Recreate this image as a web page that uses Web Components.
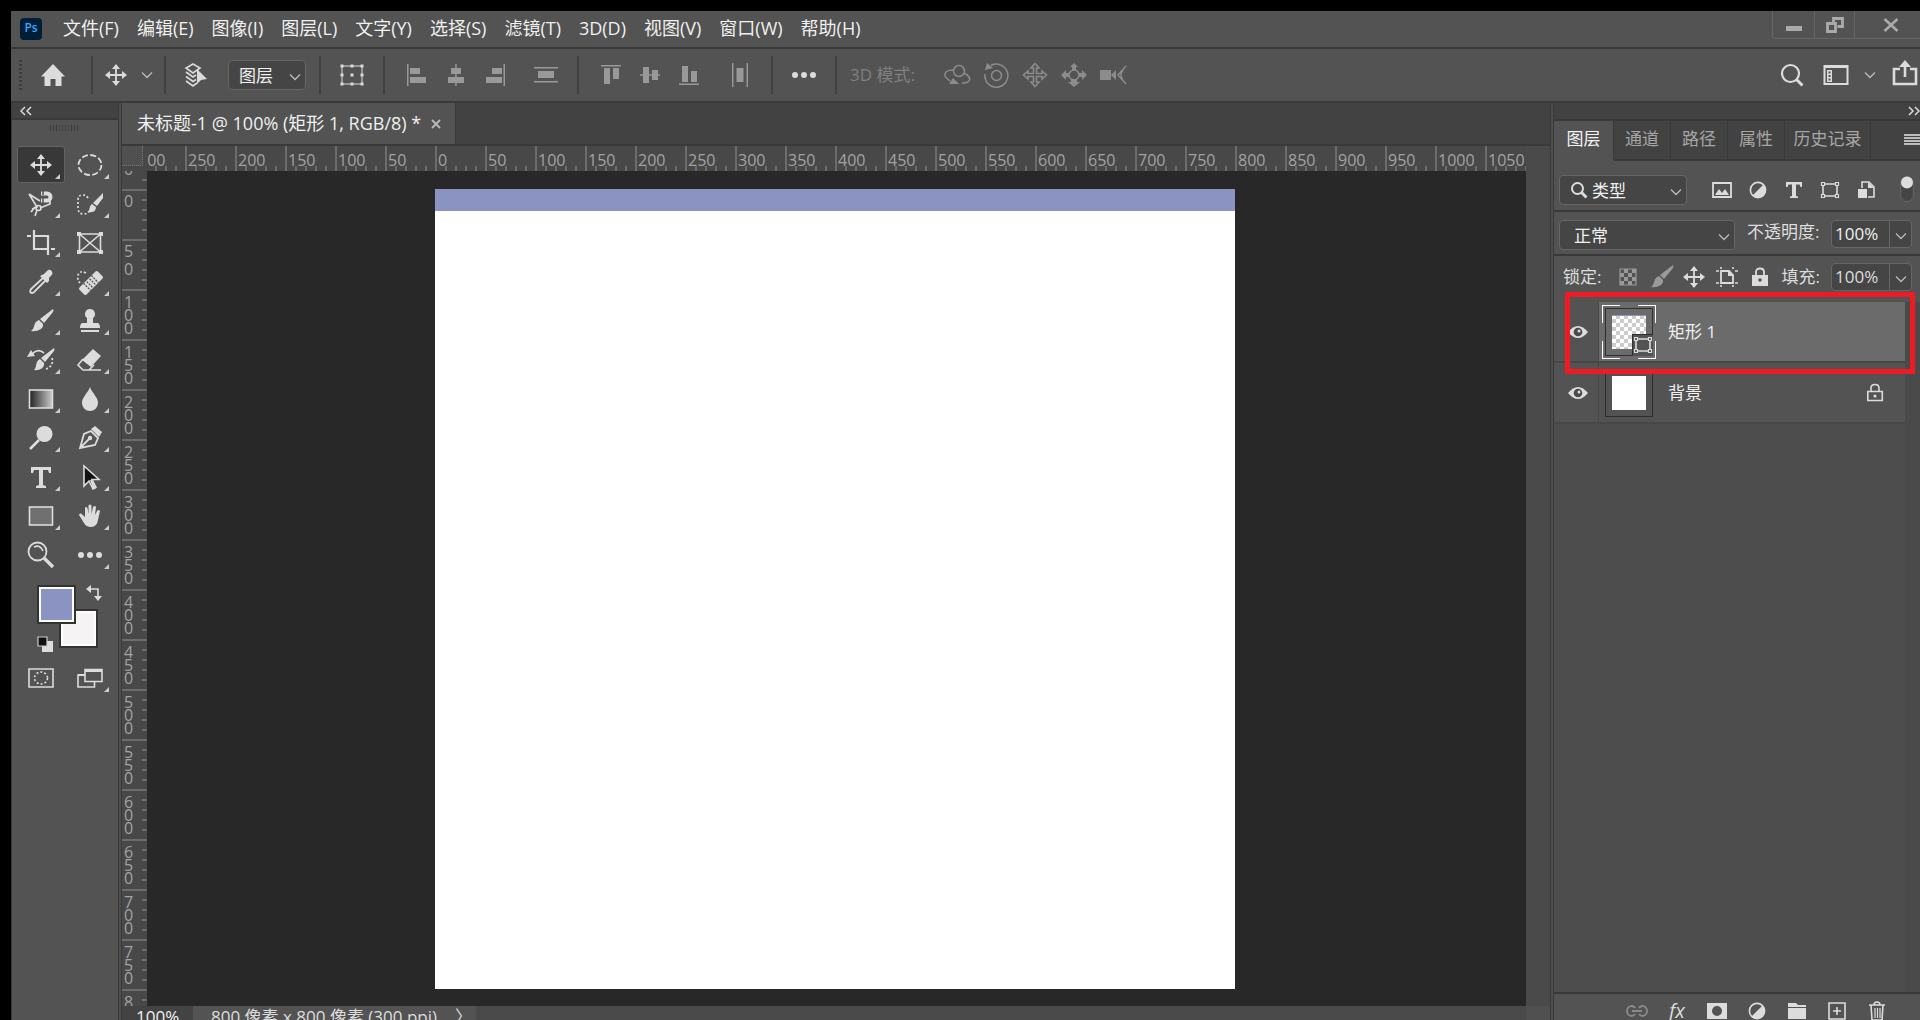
<!DOCTYPE html>
<html lang="zh-CN">
<head>
<meta charset="utf-8">
<title>未标题-1 @ 100%</title>
<style>
html,body{margin:0;height:100%;background:#000;overflow:hidden}
body{font-family:"Open Sans","Noto Sans CJK SC",sans-serif;color:#f0f0f0;
--bg:#535353;--dark:#424242;--line:#393939;--field:#454545;--edge:#666;--icon:#dcdcdc;--dim:#999}
</style>
</head>
<body>
<ps-app></ps-app>
<script>
const BASE = `*,:host{box-sizing:border-box}button,select,input{font:inherit;color:inherit;background:none;border:0;margin:0;padding:0;outline:0}
button{display:flex;align-items:center;justify-content:center}`;
function define(name, css, html) {
  customElements.define(name, class extends HTMLElement {
    connectedCallback() {
      if (this.shadowRoot) return;
      const root = this.attachShadow({ mode: 'open' });
      root.innerHTML = `<style>${BASE}${css}</style>` + (typeof html === 'function' ? html(this) : html);
    }
  });
}

/* Icons: [width, height, markup]; f = filled with currentColor, s = stroked */
const s = (d, w = 1.6, x = '') => `<path d="${d}" fill="none" stroke="currentColor" stroke-width="${w}" ${x}/>`;
const f = (d, x = '') => `<path d="${d}" fill="currentColor" ${x}/>`;
const ICONS = {
  chev: [12, 8, s('M1 1.5 6 6.5 11 1.5', 1.3)],
  home: [26, 24, f('M13 1 1 13.5h3.5V23h6v-7h5v7h6v-9.500H25z')],
  move: [24, 24, s('M12 4v16M4 12h16', 1.8) + f('M12 1l4 5H8zM12 23l4-5H8zM1 12l5-4v8zM23 12l-5-4v8z')],
  layers: [26, 26, s('M9 2 16 6 9 11 2 6zM2 10l7 5 3-2M2 14.500l7 5 3-2M2 19l7 5 4-3', 1.6) + f('M13 7v15l4-4 6-1z')],
  transform: [26, 24, s('M3 3h20v18H3z', 1) + f('M1.500 1.500h3v3h-3zM11.500 1.500h3v3h-3zM21.500 1.500h3v3h-3zM1.500 10.500h3v3h-3zM11.500 10.500h3v3h-3zM21.500 10.500h3v3h-3zM1.500 19.500h3v3h-3zM11.500 19.500h3v3h-3zM21.500 19.500h3v3h-3z')],
  al: [20, 22, f('M0 0h1.500v22H0zM3 4h10v6H3zM3 13h16v6H3z')],
  ac: [18, 22, f('M8.200 0h1.500v22H8.200zM4 4h10v6H4zM1 13h16v6H1z')],
  ar: [20, 22, f('M18.500 0H20v22h-1.500zM7 4h10v6H7zM1 13h16v6H1z')],
  ad: [26, 22, f('M1 3h24v1.500H1zM5 7h16v7H5zM1 17h24v1.500H1z')],
  at: [22, 22, f('M1 1h20v1.500H1zM4 4h6v16H4zM13 4h6v11h-6z')],
  am: [22, 22, f('M1 10.200h20v1.500H1zM4 3h6v16H4zM13 6h6v10h-6z')],
  ab: [22, 22, f('M1 19.500h20V21H1zM4 2h6v16H4zM13 7h6v11h-6z')],
  av: [16, 26, f('M0 1h1.500v24H0zM4.500 6h7v14h-7zM14.500 1H16v24h-1.500z')],
  dots: [26, 8, '<circle cx="4" cy="4" r="3" fill="currentColor"/><circle cx="13" cy="4" r="3" fill="currentColor"/><circle cx="22" cy="4" r="3" fill="currentColor"/>'],
  orbit: [28, 24, '<circle cx="16" cy="8" r="5.500" fill="none" stroke="currentColor" stroke-width="1.500"/>' + s('M10 7Q1 7 2 13q1 2 5 5M21 10c6 3 7 7 4 9-2 1-4 1-6 1', 1.5) + f('M6 21h10l-6-6z')],
  roll: [26, 26, '<circle cx="13.500" cy="13.500" r="5" fill="none" stroke="currentColor" stroke-width="1.500"/>' + s('M8 3.500A11.500 11.500 0 1 1 2 12', 1.5) + f('M2 8l2-7 6 5z')],
  pan: [26, 26, s('M13 1.500l4 4.500h-2.500v5.500H20V9l4.500 4-4.500 4v-2.500h-5.500V20H17l-4 4.500L9 20h2.500v-5.500H6V17l-4.500-4L6 9v2.500h5.500V6H9z', 1.6)],
  slide: [28, 26, '<circle cx="14" cy="13" r="5" fill="none" stroke="currentColor" stroke-width="1.500"/>' + f('M14 1l4 4h-2v3h-4V5h-2zM14 25l6-5h-3v-3h-6v3H8zM1 13l5-5v3h3v4H6v3zM27 13l-5-5v3h-3v4h3v3z')],
  cam: [28, 22, f('M1 6h11v10H1zM12 11l5-5v10z') + s('M27 2 19 11l8 9M24 6q-4 5 0 10', 1.5)],
  search: [24, 24, '<circle cx="10.500" cy="10.500" r="8.500" fill="none" stroke="currentColor" stroke-width="2.200"/>' + s('M16.500 16.500 22.500 22.500', 3)],
  ssearch: [18, 18, '<circle cx="7.500" cy="7.500" r="5.500" fill="none" stroke="currentColor" stroke-width="2"/>' + s('M11 11 16.500 16.500', 3)],
  work: [26, 22, s('M1.500 2h23v18h-23z', 2) + f('M1 1h24v3H1zM4 6h5v12H4z') + '<path d="M5.500 7.500h2v2h-2zM5.500 11h2v2h-2zM5.500 14.500h2v2h-2z" fill="#535353"/>'],
  share: [26, 26, s('M8 9H2v15h22V9h-6', 2.6) + s('M13 17V5', 2.6) + f('M13 0l6 7H7z')],
  marquee: [26, 24, '<ellipse cx="13" cy="12" rx="11.500" ry="10" fill="none" stroke="currentColor" stroke-width="1.800" stroke-dasharray="6 2.450"/>'],
  lasso: [28, 28, s('M2 4l8 13-5 2M2 4l11 7M13 18l10-4v-4M10 20l-2 6M8 17l-4 5', 1.7) + '<circle cx="11.500" cy="18" r="2.500" fill="none" stroke="currentColor" stroke-width="1.600"/>' + s('M14 3.500h6a3.500 3.500 0 0 1 0 7h-6', 4) + '<path d="M16 1v4M16 8v5" stroke="#535353" stroke-width="1.500"/>'],
  quick: [28, 26, s('M12 7Q10 4 7 4 2 4 2 9v9q1 5 5 5 5 0 6-3', 1.7, 'stroke-dasharray="2 2"') + f('M27 2v5l-6 8-4-3zM16 13l4 3c0 5-5 6-8 5 2-2 1-6 4-8z')],
  crop: [28, 26, s('M0 6h4M7 6h14v14M7 0v19h14M24 19h4M21 19v6', 2.2)],
  frame: [26, 24, s('M2.500 3h21v18h-21zM2.500 3l21 18M23.500 3l-21 18', 1.6) + f('M0 1h4v4H0zM22 1h4v4h-4zM0 19h4v4H0zM22 19h4v4h-4z')],
  eyedrop: [26, 26, s('M15 9 3 20q-2 4 1 4 2 0 3-2L18 11', 1.8) + f('M14 6l2-1 4-4q4-1 4.500 4L21 9v3l-2 2-7-7z')],
  heal: [28, 26, s('M10 4Q4 1 2 6q-1 5 2 8', 1.7, 'stroke-dasharray="2 2"') + '<g transform="rotate(-45 15 14)"><rect x="2" y="9" width="26" height="10" rx="2" fill="currentColor"/><path d="M9.500 9v10M20.500 9v10M13 10v8M17 10v8" stroke="#535353" stroke-width="1.300" stroke-dasharray="2 1"/></g>'],
  brush: [26, 26, f('M25 1q1 1 0 3l-9 11-4-4zM11 12l4 4c1 5-6 8-12 7 4-2 2-9 8-11z')],
  stamp: [24, 26, f('M12 1a5 5 0 0 1 3 9v5h5q2 1 2 5H2q0-4 2-5h5v-5a5 5 0 0 1 3-9zM3 22h18v2H3z')],
  hist: [30, 26, f('M28 1q1 1 0 3l-9 11-4-4zM14 12l4 4c1 5-5 8-10 7 3-2 1-9 6-11zM1 10l4-7 4 6z') + s('M6 7q6-6 12-1', 1.7) + s('M26 11q2 8-6 11', 1.8, 'stroke-dasharray="2 2"')],
  eraser: [26, 24, f('M16 1l8 7-10 11-9-7z') + s('M6 11l-5 6 5 5h6l5-5M6 22h18', 1.6)],
  grad: [26, 22, '<defs><linearGradient id="g"><stop offset="0" stop-color="#222"/><stop offset="1" stop-color="#ccc"/></linearGradient></defs><rect x="1.500" y="2" width="23" height="18" fill="url(#g)" stroke="currentColor" stroke-width="1.600"/>'],
  drop: [20, 26, f('M10 1c2 6 8 10 8 16a8 8 0 0 1-16 0c0-6 6-10 8-16z')],
  dodge: [26, 26, '<circle cx="16.500" cy="9" r="8" fill="currentColor"/>' + s('M11 15 2 24', 2.6)],
  pen: [26, 26, s('M3 23l4-14 7-3 7 7-3 7zM4 22l8-8', 1.8) + '<circle cx="13" cy="13" r="2.200" fill="currentColor"/>' + f('M14 4l4-3 7 6-3 5z')],
  type: [24, 24, f('M2 2h20v6h-2l-1-3h-5v15l3 1v2H7v-2l3-1V5H5L4 8H2z')],
  arrow: [24, 26, '<path d="M6 2v20l5-5 4 8 3-1.500-4-8h7z" fill="#111" stroke="currentColor" stroke-width="1.600"/>' + f('M12 16l3 9 3-1-4-8z')],
  rect: [26, 22, '<rect x="1.500" y="2" width="23" height="18" fill="#707070" stroke="currentColor" stroke-width="1.600"/>'],
  hand: [24, 26, f('M7 14V5q1-2 2.500 0l1 6V2.500q1-2 3 0V11l1.500-7q2-2 3 0l-1 8 2-4q2-2 3 0l-2 9q-1 7-7 7-5 0-7-4L1 12q0-2 2-1.500z')],
  zoom: [28, 28, '<circle cx="10.500" cy="10.500" r="9" fill="none" stroke="currentColor" stroke-width="1.800"/>' + s('M17 17l9 9', 3.4) + s('M7 6q6-3 9 4', 1.6)],
  swap: [16, 16, s('M3 4h9v9', 1.6) + f('M0 4l5-4v8zM12 16l-4-5h8z')],
  deflt: [16, 16, '<path d="M5 5h11v11H5z" fill="#ddd"/><path d="M1 1h9v9H1z" fill="#111" stroke="#ccc" stroke-width="1.200"/>'],
  mask: [26, 20, s('M1 1h24v18H1z', 1.6) + '<ellipse cx="13" cy="10" rx="6.500" ry="6" fill="none" stroke="currentColor" stroke-width="1.600" stroke-dasharray="2 2"/>'],
  screen: [26, 20, s('M8 1.500h17v12H8zM8 7H1v12h16.500v-5.500', 1.6) + f('M8 1h17v3H8zM1 6h7v2H1z')],
  pic: [20, 16, s('M1 1h18v14H1z', 1.8) + f('M3 13l4-6 3 4 3-4 4 6z')],
  adj: [18, 18, '<circle cx="9" cy="9" r="7.600" fill="none" stroke="currentColor" stroke-width="1.600"/>' + f('M14.500 3.500a7.700 7.700 0 0 1-11 11z')],
  stype: [18, 18, f('M1 1h16v5h-1.500l-1-2.500H11V15l2 .5V17H5v-1.500l2-.5V3.500H3.500L2.500 6H1z')],
  shape: [20, 18, s('M3 3h14v12H3z', 1.6) + '<path d="M1.500 1.500h3v3h-3zM15.500 1.500h3v3h-3zM1.500 13.500h3v3h-3zM15.500 13.500h3v3h-3z" fill="#535353" stroke="currentColor" stroke-width="1.200"/>'],
  smart: [18, 18, s('M5 7V1h7l5 5v10h-6', 1.6) + f('M1 8h9v9H1zM11 1l6 6h-6z')],
  toggle: [14, 26, '<rect x=".7" y=".5" width="12.600" height="25" rx="6.300" fill="#454545" stroke="#666"/><circle cx="7" cy="6.500" r="6" fill="#ddd"/>'],
  burger: [16, 12, f('M0 0h16v2H0zM0 3h16v2H0zM0 6h16v2H0zM0 9h16v2H0z')],
  check: [18, 18, s('M1 1h16v16H1z', 1.2) + f('M5 1h4v4H5zM13 1h4v4h-4zM1 5h4v4H1zM9 5h4v4H9zM5 9h4v4H5zM13 9h4v4h-4zM1 13h4v4H1zM9 13h4v4H9z')],
  artb: [22, 20, s('M5 4h8l4 4v8H5z', 1.8) + f('M12 4l6 5h-6z') + s('M0 4h3M19 4h3M0 16h3M19 16h3M5 0v2M17 0v2M5 18v2M17 18v2', 1.6)],
  lock: [18, 20, f('M1 8h16v11H1z') + s('M5 9V5q0-3.500 4-3.500t4 3.500v4', 1.8) + '<circle cx="9" cy="13" r="1.800" fill="#535353"/>'],
  olock: [18, 20, s('M1.800 8.500h14.500v9H1.800zM5 8V5q0-3.500 4-3.500t4 3.500v3', 1.6) + '<circle cx="9" cy="13" r="1.600" fill="currentColor"/>'],
  eye: [20, 14, f('M0 7Q10-5 20 7 10 19 0 7z') + '<circle cx="10" cy="7" r="4.300" fill="#4a4a4a"/><circle cx="11" cy="6" r="1.500" fill="currentColor"/>'],
  link: [22, 12, s('M9 9q-1 2-4 2-4-1-4-5t4-5q3 0 4 2M13 3q1-2 4-2 4 1 4 5t-4 5q-3 0-4-2M6 6h10', 1.8)],
  lmask: [20, 16, '<path d="M0 0h20v16H0zM10 3a5 5 0 1 0 0 10 5 5 0 0 0 0-10z" fill="currentColor" fill-rule="evenodd"/>'],
  folder: [18, 16, f('M0 0h8l2 2h8v2H0zM0 5h18v11H0z')],
  plus: [18, 18, s('M1 1h16v16H1zM5 9h8M9 5v8', 1.6)],
  trash: [18, 20, s('M1 4h16M3 4l1 15h10l1-15M6 4q0-3 3-3t3 3', 1.6) + s('M7 7v10M9.500 7v10M12 7v10', 1.2)],
  min: [16, 6, f('M0 0h16v5H0z')],
  restore: [18, 16, s('M7.500 6V1.500h9v8h-5M1.500 6.500h8v8h-8z', 2.8)],
  close: [16, 14, s('M1.500 1l13 12M14.500 1l-13 12', 2.6)],
  tabx: [10, 10, s('M1 1l8 8M9 1 1 9', 1.8)],
  dbl: [12, 10, s('M5 1 1 5l4 4M11 1 7 5l4 4', 1.5)],
  dbr: [12, 10, s('M1 1l4 4-4 4M7 1l4 4-4 4', 1.5)]
};
define('ps-icon', ':host{display:inline-flex;flex:none;color:var(--icon)}svg{display:block}', el => {
  const [w, h, m] = ICONS[el.getAttribute('name')];
  return `<svg width="${w}" height="${h}" viewBox="0 0 ${w} ${h}" aria-hidden="true">${m}</svg>`;
});
const icon = (n, c = '') => `<ps-icon name="${n}" class="${c}"></ps-icon>`;

define('ps-menu-bar', `:host{display:flex;height:38px;flex:none;background:var(--bg);border-bottom:2px solid var(--line);padding-left:9px;font-size:18px}
.logo{align-self:center;width:22px;height:22px;border-radius:4px;background:#001e36;color:#31a8ff;font-weight:600;font-size:12px;line-height:20px;text-align:center;margin:0 21px 0 0}
nav{display:flex;gap:18px;padding-bottom:3px}nav button{line-height:26px;white-space:nowrap}
.win{margin-left:auto;display:flex;height:28px;border:1px solid #666;border-width:0 0 1px 1px;border-radius:0 0 0 4px;--icon:#aaa}
.win button{border-right:1px solid #666;width:42px}.win button:first-child{padding-top:9px}.win button:nth-child(2){width:40px}.win button:last-child{width:65px;border:0;padding-left:6px}`,
`<div class="logo">Ps</div><nav>${['文件(F)', '编辑(E)', '图像(I)', '图层(L)', '文字(Y)', '选择(S)', '滤镜(T)', '3D(D)', '视图(V)', '窗口(W)', '帮助(H)'].map(t => `<button>${t}</button>`).join('')}</nav>
<div class="win"><button aria-label="最小化">${icon('min')}</button><button aria-label="还原">${icon('restore')}</button><button aria-label="关闭">${icon('close')}</button></div>`);

define('ps-select', `:host{display:flex;align-items:center;height:30px;background:var(--field);border:1px solid var(--edge);border-radius:4px;font-size:17px;padding:0 4px 0 10px}
select{appearance:none;flex:1;min-width:0;height:28px;padding-left:4px}::slotted(*){flex:none}.c{--icon:#bbb;padding-top:4px}`,
el => `<slot></slot><select aria-label="${el.getAttribute('label')}"><option>${el.getAttribute('value')}</option></select>${icon('chev', 'c')}`);

define('ps-percent', `:host{display:flex;width:81px;height:28px;flex:none;background:var(--field);border:1px solid var(--edge);border-radius:4px;font-size:17px}
input{width:58px;border-right:1px solid var(--edge);padding-left:3px;padding-bottom:1px}button{flex:1;padding-top:4px;--icon:#bbb}`,
el => `<input value="100%" aria-label="${el.getAttribute('label')}"><button aria-label="调整">${icon('chev')}</button>`);

define('ps-options-bar', `:host{display:flex;align-items:center;height:54px;flex:none;background:var(--bg);border-bottom:2px solid var(--line);padding-left:8px}
i{width:2px;height:38px;background:#404040;flex:none}.grip{width:3px;height:30px;background:repeating-linear-gradient(#3c3c3c 0 2px,transparent 2px 4px)}
.b{width:62px;height:38px}.b.first{margin-right:7px}.mv{width:45px}.ch{width:18px;margin-right:8px;height:38px;--icon:#bbb}
ps-select{width:78px;margin-right:13px;padding-left:6px}.grp{display:flex;padding:0 12px;--icon:var(--dim)}.grp button{width:39px;height:38px}.grp button:nth-child(4){margin-left:12px}
.t{width:100px;padding:0 0 3px 13px;font-size:17px;color:#808080;white-space:nowrap}.m{display:flex;--icon:#8c8c8c}.m button{width:39px;height:38px}
.r{margin-left:auto;display:flex}.r button{width:44px;height:38px}.r .c{width:24px;--icon:#bbb}.r .sh{width:38px;padding-left:7px;padding-bottom:4px}`,
`<span class="grip"></span><button class="b first" aria-label="主页">${icon('home')}</button><i></i><button class="mv" aria-label="移动">${icon('move')}</button><button class="ch" aria-label="更多">${icon('chev')}</button><i></i>
<button class="b" aria-label="自动选择">${icon('layers')}</button><ps-select label="选择对象" value="图层"></ps-select><i></i><button class="b" aria-label="变换控件">${icon('transform')}</button><i></i>
<div class="grp">${['al', 'ac', 'ar', 'ad'].map(n => `<button aria-label="对齐">${icon(n)}</button>`).join('')}</div><i></i>
<div class="grp">${['at', 'am', 'ab', 'av'].map(n => `<button aria-label="对齐">${icon(n)}</button>`).join('')}</div><i></i>
<button class="b" aria-label="更多选项">${icon('dots')}</button><i></i><span class="t">3D 模式:</span>
<div class="m">${['orbit', 'roll', 'pan', 'slide', 'cam'].map(n => `<button aria-label="3D">${icon(n)}</button>`).join('')}</div>
<div class="r"><button aria-label="搜索">${icon('search')}</button><button aria-label="工作区">${icon('work')}</button><button class="c" aria-label="更多">${icon('chev')}</button><button class="sh" aria-label="共享">${icon('share')}</button></div>`);

const TOOLS = ['move', 'marquee', 'lasso', 'quick', 'crop', 'frame', 'eyedrop', 'heal', 'brush', 'stamp', 'hist', 'eraser', 'grad', 'drop', 'dodge', 'pen', 'type', 'arrow', 'rect', 'hand', 'zoom', 'dots'];
define('ps-toolbox', `:host{display:flex;flex-direction:column;width:108px;flex:none;background:var(--bg);border:1px solid var(--line);border-width:0 1px}
header{height:17px;background:var(--dark);border-bottom:2px solid var(--line);padding:0 0 0 8px;display:flex;align-items:center}
.grip{width:28px;height:6px;margin:5px 0 15px 38px;background:repeating-linear-gradient(90deg,#3f3f3f 0 1px,transparent 1px 3px)}
.tools{display:grid;grid-template-columns:48px 48px;grid-auto-rows:37px;gap:2px 1px;padding-left:5px}
.tools button{position:relative;border:1px solid transparent;border-radius:3px}.tools .on{background:#383838;border-color:#636363}
.tools .more::after{content:"";position:absolute;right:4px;bottom:3px;width:5px;height:5px;background:#ccc;clip-path:polygon(100% 0,100% 100%,0 100%)}
.sw{display:grid;grid-template-columns:22px 17px 8px 18px;grid-template-rows:24px 15px 14px 10px;margin:12px 0 0 25px}
.sw input{appearance:none;width:39px;height:39px;border:2px solid #333;background:#333}
.sw input::-webkit-color-swatch-wrapper{padding:0}.sw input::-webkit-color-swatch{border:2px solid #fff;border-radius:0}
.fg{grid-area:1/1/3/3;z-index:1}.bg{grid-area:2/2/4/5}.swap{grid-area:1/4;justify-self:end;width:16px;height:16px}.def{grid-area:3/1/5/2;margin-top:12px;width:16px;height:16px}
.low{margin-top:11px}`,
`<header>${icon('dbl')}</header><div class="grip"></div>
<div class="tools">${TOOLS.map((n, i) => `<button aria-label="${n}" class="${i ? '' : 'on '}${n === 'frame' || n === 'zoom' ? '' : 'more'}">${icon(n)}</button>`).join('')}</div>
<div class="sw"><input class="fg" type="color" value="#8b93c3" aria-label="前景色"><input class="bg" type="color" value="#f6f3f4" aria-label="背景色"><button class="swap" aria-label="切换">${icon('swap')}</button><button class="def" aria-label="默认">${icon('deflt')}</button></div>
<div class="tools low"><button aria-label="蒙版">${icon('mask')}</button><button class="more" aria-label="屏幕模式">${icon('screen')}</button></div>`);

define('ps-ruler', `:host{display:block;overflow:hidden;background:#484848;color:#a3a3a3;font-size:16px;min-width:0;min-height:0}
.h,.v{display:flex}.v{flex-direction:column}.h{margin-left:-12px}.v{margin-top:-32px}
.h span{flex:none;width:50px;height:25px;border-left:2px solid #6c6c6c;line-height:28px;padding-left:1px;background:repeating-linear-gradient(90deg,transparent 0 8px,#6c6c6c 8px 10px) 0 100%/48px 5px no-repeat}
.v span{flex:none;height:50px;width:25px;word-break:break-all;border-top:2px solid #6c6c6c;line-height:13px;padding:5px 12px 0 2px;background:repeating-linear-gradient(transparent 0 8px,#6c6c6c 8px 10px) 100% 0/5px 48px no-repeat}
.v .two{line-height:18px;padding-top:1px}`,
el => {
  const v = el.hasAttribute('vertical'), out = [];
  for (let n = v ? -50 : -300; n <= (v ? 800 : 1050); n += 50) {
    const t = String(Math.abs(n));
    out.push(`<span class="${t.length < 3 ? 'two' : ''}">${t}</span>`);
  }
  return `<div class="${v ? 'v' : 'h'}">${out.join('')}</div>`;
});

define('ps-document', `:host{display:flex;flex-direction:column;flex:1;min-width:0;border:1px solid var(--line);border-width:0 1px}
.tabs{height:43px;flex:none;background:var(--dark);border-bottom:2px solid var(--line);display:flex}
.tab{display:flex;align-items:center;background:var(--bg);border-right:1px solid var(--line);padding:0 14px 0 15px;gap:10px;font-size:18px;white-space:nowrap;--icon:#bbb}
.tab button:first-child{padding-bottom:4px}
.grid{flex:1;min-height:0;display:grid;grid-template:25px minmax(0,1fr) 14px/25px minmax(0,1fr) 24px}
.corner{background:#505050;border:1px dotted #777;border-width:0 1px 1px 0;margin:0 4px 5px 0}
.corner-wrap{background:#484848;display:grid}
.canvas{background:#282828;display:flex;align-items:center;justify-content:center;overflow:hidden;padding-right:3px}
.page{width:800px;height:800px;flex:none;background:#fff}.page div{height:22px;background:#8b93c3}
.sb{background:#4a4a4a}.st{grid-column:1/3;background:#4a4a4a;display:flex;align-items:flex-start;overflow:hidden;font-size:17px;line-height:22px;white-space:nowrap}
.st input{width:71px;height:22px;background:#434343;padding-left:14px;flex:none}.st div{background:var(--bg);padding:0 4px 0 18px;display:flex;gap:18px;color:#ddd}
.end{background:#505050}`,
`<div class="tabs"><div class="tab"><button>未标题-1 @ 100% (矩形 1, RGB/8) *</button><button aria-label="关闭">${icon('tabx')}</button></div></div>
<div class="grid"><div class="corner-wrap"><div class="corner"></div></div><ps-ruler></ps-ruler><div class="sb"></div>
<ps-ruler vertical></ps-ruler><div class="canvas"><div class="page"><div></div></div></div><div class="sb"></div>
<div class="st"><input value="100%" aria-label="缩放"><div><span>800 像素 x 800 像素 (300 ppi)</span><span>〉</span></div></div><div class="end"></div></div>`);

define('ps-layer', `:host{display:flex;height:61px;border-bottom:2px solid #474747;font-size:17px;background:var(--bg)}
.eye{width:45px;border-right:1px solid #474747;padding-left:4px;flex:none}.row{flex:1;display:flex;align-items:center;padding:0 21px 0 3px}
:host([selected]) .row{background:#6b6b6b}
.th{position:relative;width:54px;height:54px;padding:3px;flex:none}
:host([selected]) .th{background:linear-gradient(#fff,#fff) 0 0/18px 1px,linear-gradient(#fff,#fff) 0 0/1px 18px,linear-gradient(#fff,#fff) 100% 0/18px 1px,linear-gradient(#fff,#fff) 100% 0/1px 18px,linear-gradient(#fff,#fff) 0 100%/18px 1px,linear-gradient(#fff,#fff) 0 100%/1px 18px,linear-gradient(#fff,#fff) 100% 100%/18px 1px,linear-gradient(#fff,#fff) 100% 100%/1px 18px;background-repeat:no-repeat}
.fr{height:48px;border:1px solid #2e2e2e;padding:6px}.im{height:34px;background:#fff}
:host([selected]) .im{background:linear-gradient(#8b93c3,#8b93c3) 0 0/100% 1px no-repeat,repeating-conic-gradient(#ccc 0 25%,#fff 0 50%) 0 0/8px 8px}
.bd{position:absolute;right:3px;bottom:3px;width:21px;height:22px;background:#535353;border:1px solid #2e2e2e;border-width:1px 0 0 1px;display:flex;align-items:center;justify-content:center}
.name{padding-left:12px;padding-bottom:2px;flex:1}`,
el => `<button class="eye" aria-label="可见性">${icon('eye')}</button><div class="row"><div class="th"><div class="fr"><div class="im"></div></div>${el.hasAttribute('selected') ? `<span class="bd">${icon('shape')}</span>` : ''}</div><span class="name"><slot></slot></span>${el.hasAttribute('locked') ? icon('olock') : ''}</div>`);

define('ps-layers-panel', `:host{display:flex;flex-direction:column;width:367px;flex:none;background:var(--bg);border-left:1px solid var(--line);font-size:17px}
header{height:18px;flex:none;background:var(--dark);border-bottom:2px solid var(--line);display:flex;justify-content:flex-end;align-items:center}
.tabs{height:40px;flex:none;display:flex;background:var(--dark);color:#a6a6a6}.tabs button{padding:0 0 5px;border:solid var(--line);border-width:0 1px 2px 0;width:57px;white-space:nowrap}
.tabs button:first-child{width:60px;background:var(--bg);color:#f4f4f4;border-bottom-color:var(--bg)}.tabs button:nth-child(5){width:86px}
.tabs .mn{flex:1;width:auto;border-right:0;padding:0;justify-content:flex-end;--icon:#bbb}
.row{display:flex;flex:none;border-bottom:2px solid var(--line);padding:8px 8px 0 5px}
.flt{height:51px;padding-top:14px;padding-right:2px}.flt ps-select{width:128px}.flt .fi{display:flex;margin-left:17px}.fi button{width:36px;height:30px}.flt .tg{margin-left:auto;width:22px;height:28px}
.bl{height:44px}.bl ps-select{width:176px}label{color:#ddd;white-space:nowrap;line-height:24px}.bl label{margin-left:12px}ps-percent{margin-left:auto}
.lk{height:46px;border:0;padding:7px 8px 0 9px;color:#ddd}.lk .ic{display:flex;margin-left:10px}.ic button{width:33px;height:28px}.ic .dm{--icon:#999}.lk label,.lk span{line-height:27px}.lk label{margin-left:5px}
.list{flex:1;min-height:0;display:flex;position:relative;background:#4d4d4d}.ls{flex:1}.sb{width:15px;background:#4a4a4a}
.mark{position:absolute;left:11px;top:-10px;right:5px;height:82px;border:5px solid #ed1c24;pointer-events:none}
footer{height:28px;flex:none;border-top:2px solid var(--line);display:flex;align-items:center;justify-content:flex-end;padding:8px 23px 0 0}
footer button{width:40px;height:20px}footer button:first-child{--icon:#8a8a8a}.fx{font:italic 20px/20px "Open Sans",sans-serif;color:#ddd}`,
`<header>${icon('dbr')}</header>
<div class="tabs"><button>图层</button><button>通道</button><button>路径</button><button>属性</button><button>历史记录</button><button class="mn" aria-label="面板菜单">${icon('burger')}</button></div>
<div class="row flt"><ps-select label="滤镜" value="类型">${icon('ssearch')}</ps-select><div class="fi">${['pic', 'adj', 'stype', 'shape', 'smart'].map(n => `<button aria-label="${n}">${icon(n)}</button>`).join('')}</div><button class="tg" aria-label="开关">${icon('toggle')}</button></div>
<div class="row bl"><ps-select label="混合模式" value="正常"></ps-select><label>不透明度:</label><ps-percent label="不透明度"></ps-percent></div>
<div class="row lk"><span>锁定:</span><div class="ic"><button class="dm" aria-label="透明像素">${icon('check')}</button><button class="dm" aria-label="图像像素">${icon('brush')}</button><button aria-label="位置">${icon('move')}</button><button aria-label="画板">${icon('artb')}</button><button aria-label="全部">${icon('lock')}</button></div><label>填充:</label><ps-percent label="填充"></ps-percent></div>
<div class="list"><div class="ls"><ps-layer selected>矩形 1</ps-layer><ps-layer locked>背景</ps-layer></div><div class="sb"></div><div class="mark"></div></div>
<footer><button aria-label="链接">${icon('link')}</button><button class="fx">fx</button><button aria-label="蒙版">${icon('lmask')}</button><button aria-label="调整">${icon('adj')}</button><button aria-label="组">${icon('folder')}</button><button aria-label="新建">${icon('plus')}</button><button aria-label="删除">${icon('trash')}</button></footer>`);

define('ps-app', `:host{display:flex;flex-direction:column;height:100vh;padding:11px 0 0 11px;background:#000}
main{flex:1;min-height:0;display:flex;gap:2px;background:#4e4e4e}`,
`<ps-menu-bar></ps-menu-bar><ps-options-bar></ps-options-bar><main><ps-toolbox></ps-toolbox><ps-document></ps-document><ps-layers-panel></ps-layers-panel></main>`);
</script>
</body>
</html>
